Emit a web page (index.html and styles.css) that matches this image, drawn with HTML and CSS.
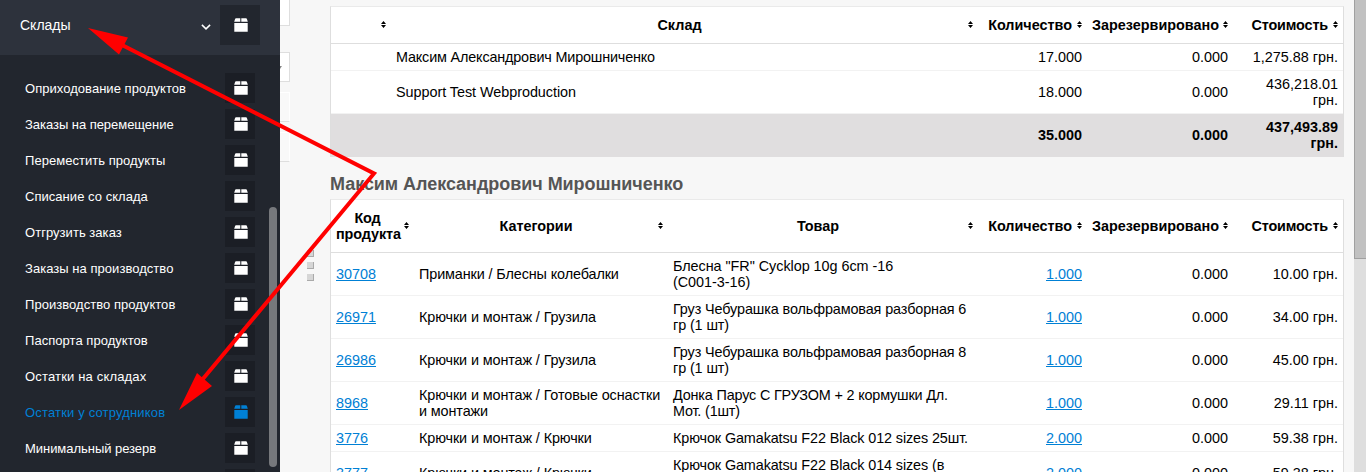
FILE: index.html
```html
<!DOCTYPE html>
<html lang="ru">
<head>
<meta charset="utf-8">
<title>Остатки у сотрудников</title>
<link rel="stylesheet" href="styles.css">
</head>
<body>
<svg class="defs" aria-hidden="true">
  <symbol id="box" viewBox="0 0 14 14"><path d="M2 .3h4.300v3.500H.2L1 1.200Q1.300.3 2 .3zM7.300.3H12q.7 0 1 .9l.8 2.600H7.300zM.3 5h13.400v8.700H.3z"/></symbol>
</svg>
<div class="app">
  <nav class="sidebar">
    <div class="group">
      <span class="group-name">Склады</span>
      <svg class="chevron" viewBox="0 0 10 6"><path d="M.9.9 5 4.900 9.100.9"/></svg>
      <span class="tile large"><svg><use href="#box"/></svg></span>
    </div>
    <ul class="menu">
      <li><span>Оприходование продуктов</span><i class="tile"><svg><use href="#box"/></svg></i></li>
      <li><span class="tight">Заказы на перемещение</span><i class="tile"><svg><use href="#box"/></svg></i></li>
      <li><span>Переместить продукты</span><i class="tile"><svg><use href="#box"/></svg></i></li>
      <li><span>Списание со склада</span><i class="tile"><svg><use href="#box"/></svg></i></li>
      <li><span>Отгрузить заказ</span><i class="tile"><svg><use href="#box"/></svg></i></li>
      <li><span>Заказы на производство</span><i class="tile"><svg><use href="#box"/></svg></i></li>
      <li><span>Производство продуктов</span><i class="tile"><svg><use href="#box"/></svg></i></li>
      <li><span>Паспорта продуктов</span><i class="tile"><svg><use href="#box"/></svg></i></li>
      <li><span class="loose">Остатки на складах</span><i class="tile"><svg><use href="#box"/></svg></i></li>
      <li class="active"><span class="loose">Остатки у сотрудников</span><i class="tile"><svg><use href="#box"/></svg></i></li>
      <li><span class="tight">Минимальный резерв</span><i class="tile"><svg><use href="#box"/></svg></i></li>
      <li><span></span><i class="tile"></i></li>
    </ul>
    <div class="side-scroll"></div>
  </nav>
  <aside class="filters">
    <div class="field first"></div>
    <div class="field select"><svg class="caret" viewBox="0 0 2 3"><path d="M0 0h2L0 3z"/></svg></div>
    <div class="field pale"></div>
    <div class="field pale last"></div>
  </aside>
  <div class="grip"><i></i><i></i><i></i></div>
  <main class="content">
    <table class="report">
      <colgroup><col class="c-blank"><col class="c-store"><col class="c-qty"><col class="c-res"><col class="c-cost"></colgroup>
      <thead><tr class="short">
        <th><svg class="sort" viewBox="0 0 5 7"><path d="M0 3 2.500 0 5 3zM0 4h5L2.500 7z"/></svg></th>
        <th>Склад<svg class="sort" viewBox="0 0 5 7"><path d="M0 3 2.500 0 5 3zM0 4h5L2.500 7z"/></svg></th>
        <th class="num">Количество<svg class="sort" viewBox="0 0 5 7"><path d="M0 3 2.500 0 5 3zM0 4h5L2.500 7z"/></svg></th>
        <th class="num">Зарезервировано<svg class="sort" viewBox="0 0 5 7"><path d="M0 3 2.500 0 5 3zM0 4h5L2.500 7z"/></svg></th>
        <th class="num cost">Стоимость<svg class="sort" viewBox="0 0 5 7"><path d="M0 3 2.500 0 5 3zM0 4h5L2.500 7z"/></svg></th>
      </tr></thead>
      <tbody>
        <tr><td></td><td class="person">Максим Александрович Мирошниченко</td><td class="num">17.000</td><td class="num">0.000</td><td class="num">1,275.88 грн.</td></tr>
        <tr><td></td><td class="latin">Support Test Webproduction</td><td class="num">18.000</td><td class="num">0.000</td><td class="num">436,218.01 грн.</td></tr>
        <tr class="total"><td></td><td></td><td class="num">35.000</td><td class="num">0.000</td><td class="num">437,493.89 грн.</td></tr>
      </tbody>
    </table>
    <h2>Максим Александрович Мирошниченко</h2>
    <table class="report">
      <colgroup><col class="c-code"><col class="c-cat"><col class="c-item"><col class="c-qty"><col class="c-res"><col class="c-cost"></colgroup>
      <thead><tr class="tall">
        <th class="code">Код продукта<svg class="sort" viewBox="0 0 5 7"><path d="M0 3 2.500 0 5 3zM0 4h5L2.500 7z"/></svg></th>
        <th>Категории<svg class="sort" viewBox="0 0 5 7"><path d="M0 3 2.500 0 5 3zM0 4h5L2.500 7z"/></svg></th>
        <th>Товар<svg class="sort" viewBox="0 0 5 7"><path d="M0 3 2.500 0 5 3zM0 4h5L2.500 7z"/></svg></th>
        <th class="num">Количество<svg class="sort" viewBox="0 0 5 7"><path d="M0 3 2.500 0 5 3zM0 4h5L2.500 7z"/></svg></th>
        <th class="num">Зарезервировано<svg class="sort" viewBox="0 0 5 7"><path d="M0 3 2.500 0 5 3zM0 4h5L2.500 7z"/></svg></th>
        <th class="num cost">Стоимость<svg class="sort" viewBox="0 0 5 7"><path d="M0 3 2.500 0 5 3zM0 4h5L2.500 7z"/></svg></th>
      </tr></thead>
      <tbody>
        <tr><td><a href="#">30708</a></td><td class="text">Приманки / Блесны колебалки</td><td class="latin">Блесна "FR" Cycklop 10g 6cm -16<br>(C001-3-16)</td><td class="num"><a href="#">1.000</a></td><td class="num">0.000</td><td class="num">10.00 грн.</td></tr>
        <tr><td><a href="#">26971</a></td><td class="text">Крючки и монтаж / Грузила</td><td class="text">Груз Чебурашка вольфрамовая разборная 6<br>гр (1 шт)</td><td class="num"><a href="#">1.000</a></td><td class="num">0.000</td><td class="num">34.00 грн.</td></tr>
        <tr><td><a href="#">26986</a></td><td class="text">Крючки и монтаж / Грузила</td><td class="text">Груз Чебурашка вольфрамовая разборная 8<br>гр (1 шт)</td><td class="num"><a href="#">1.000</a></td><td class="num">0.000</td><td class="num">45.00 грн.</td></tr>
        <tr><td><a href="#">8968</a></td><td class="text">Крючки и монтаж / Готовые оснастки<br>и монтажи</td><td class="person">Донка Парус С ГРУЗОМ + 2 кормушки Дл.<br>Мот. (1шт)</td><td class="num"><a href="#">1.000</a></td><td class="num">0.000</td><td class="num">29.11 грн.</td></tr>
        <tr><td><a href="#">3776</a></td><td class="text">Крючки и монтаж / Крючки</td><td class="text">Крючок Gamakatsu F22 Black 012 sizes 25шт.</td><td class="num"><a href="#">2.000</a></td><td class="num">0.000</td><td class="num">59.38 грн.</td></tr>
        <tr><td><a href="#">3777</a></td><td class="text">Крючки и монтаж / Крючки</td><td class="text">Крючок Gamakatsu F22 Black 014 sizes (в<br>уп. 25шт)</td><td class="num"><a href="#">2.000</a></td><td class="num">0.000</td><td class="num">59.38 грн.</td></tr>
      </tbody>
    </table>
  </main>
  <div class="page-scroll"><div class="thumb"></div></div>
</div>
<svg class="arrows" viewBox="0 0 1366 472">
  <path class="line" d="M122 45 374 173.500 202 380"/>
  <path d="M88 28 128 37.500 119 54.500zM179 410 197 373 212 386z"/>
</svg>
</body>
</html>
```
FILE: styles.css
```css
* { box-sizing: border-box; }
body { margin: 0; background: #f7f7f7; color: #000; font: 14.4px/16px "Liberation Sans", Arial, sans-serif; overflow: hidden; }
.defs { display: none; }
.app { display: flex; height: 472px; overflow: hidden; }

.sidebar { position: relative; flex: none; width: 280px; background: #22262e; color: #fff; }
.group { display: flex; align-items: center; height: 55px; padding: 0 20px 5px; background: #2d323c; }
.group-name { flex: 1; font-size: 14px; }
.chevron { width: 10px; height: 6px; margin: 4px 9px 0 0; fill: none; stroke: #fff; stroke-width: 1.500; }
.tile { display: flex; flex: none; align-items: center; justify-content: center; width: 30px; height: 30px; background: #1b1e25; }
.tile.large { width: 40px; height: 40px; background: #22262e; }
.tile svg { width: 14px; height: 14px; margin-left: 1px; fill: currentColor; }
.menu { margin: 0; padding: 15px 25px 0; list-style: none; font-size: 13px; letter-spacing: .04px; }
.menu li { display: flex; align-items: center; justify-content: space-between; height: 36px; }
.menu span { padding-top: 2px; }
.menu .tight { letter-spacing: -.04px; }
.menu .loose { letter-spacing: .17px; }
.menu .active { color: #0080d5; }
.side-scroll { position: absolute; top: 207px; right: 3px; width: 8px; height: 260px; border-radius: 4px; background: #76787c; }

.filters { flex: none; width: 10px; }
.field { height: 30px; background: #fff; border: solid #dedede; border-width: 1px 1px 1px 0; }
.field.first { height: 26px; border-top: 0; }
.field.select { display: flex; align-items: center; margin-top: 26px; }
.caret { width: 2px; height: 3px; fill: #888; }
.field.pale { margin-top: 10px; background: #f9f9f9; border-color: #fff #fff #dedede; }

.grip { display: flex; flex: none; flex-direction: column; gap: 5px; width: 8px; margin: 250px 15px 0 17px; }
.grip i { width: 7px; height: 7px; background: #d6d6d6; border: solid #aaa; border-width: 0 1px 1px 0; }

.content { flex: none; width: 1014px; padding-top: 6px; }
.report { width: 1014px; table-layout: fixed; border-collapse: separate; border-spacing: 0; background: #fff; border: 1px solid #dedede; border-top-color: #eaeaea; border-bottom: 0; }
.c-blank { width: 60px; }
.c-store { width: 587px; }
.c-code { width: 83px; }
.c-cat { width: 254px; }
.c-item { width: 310px; }
.c-qty { width: 109px; }
.c-res { width: 146px; }
th, td { padding: 5px; border-bottom: 1px solid #f2f2f2; vertical-align: middle; text-align: left; }
th { position: relative; padding-right: 15px; border-color: #dedede; text-align: center; }
.short th { height: 37px; padding-bottom: 6px; }
.tall th { height: 53px; }
.num { text-align: right; }
.text { letter-spacing: -.11px; white-space: nowrap; }
.person { letter-spacing: -.165px; white-space: nowrap; }
.latin { letter-spacing: -.04px; }
.code { letter-spacing: -.1px; }
.cost { letter-spacing: -.15px; }
.sort { position: absolute; top: 50%; right: 5px; width: 5px; height: 7px; margin-top: -4px; }
.total td { background: #e0dedf; border-color: #e0dedf; font-weight: bold; }
a { color: #0080d5; }
h2 { margin: 17px 0 5px; color: #555; font-size: 18px; line-height: 20px; letter-spacing: -.04px; }

.page-scroll { flex: none; width: 12px; margin-left: 10px; background: #dedede; }
.thumb { height: 259px; background: #c1c1c1; border: solid #a0a0a0; border-width: 0 0 1px 1px; }

.arrows { position: absolute; top: 0; left: 0; width: 1366px; height: 472px; fill: #f00; pointer-events: none; }
.arrows .line { fill: none; stroke: #f00; stroke-width: 4; }
```
